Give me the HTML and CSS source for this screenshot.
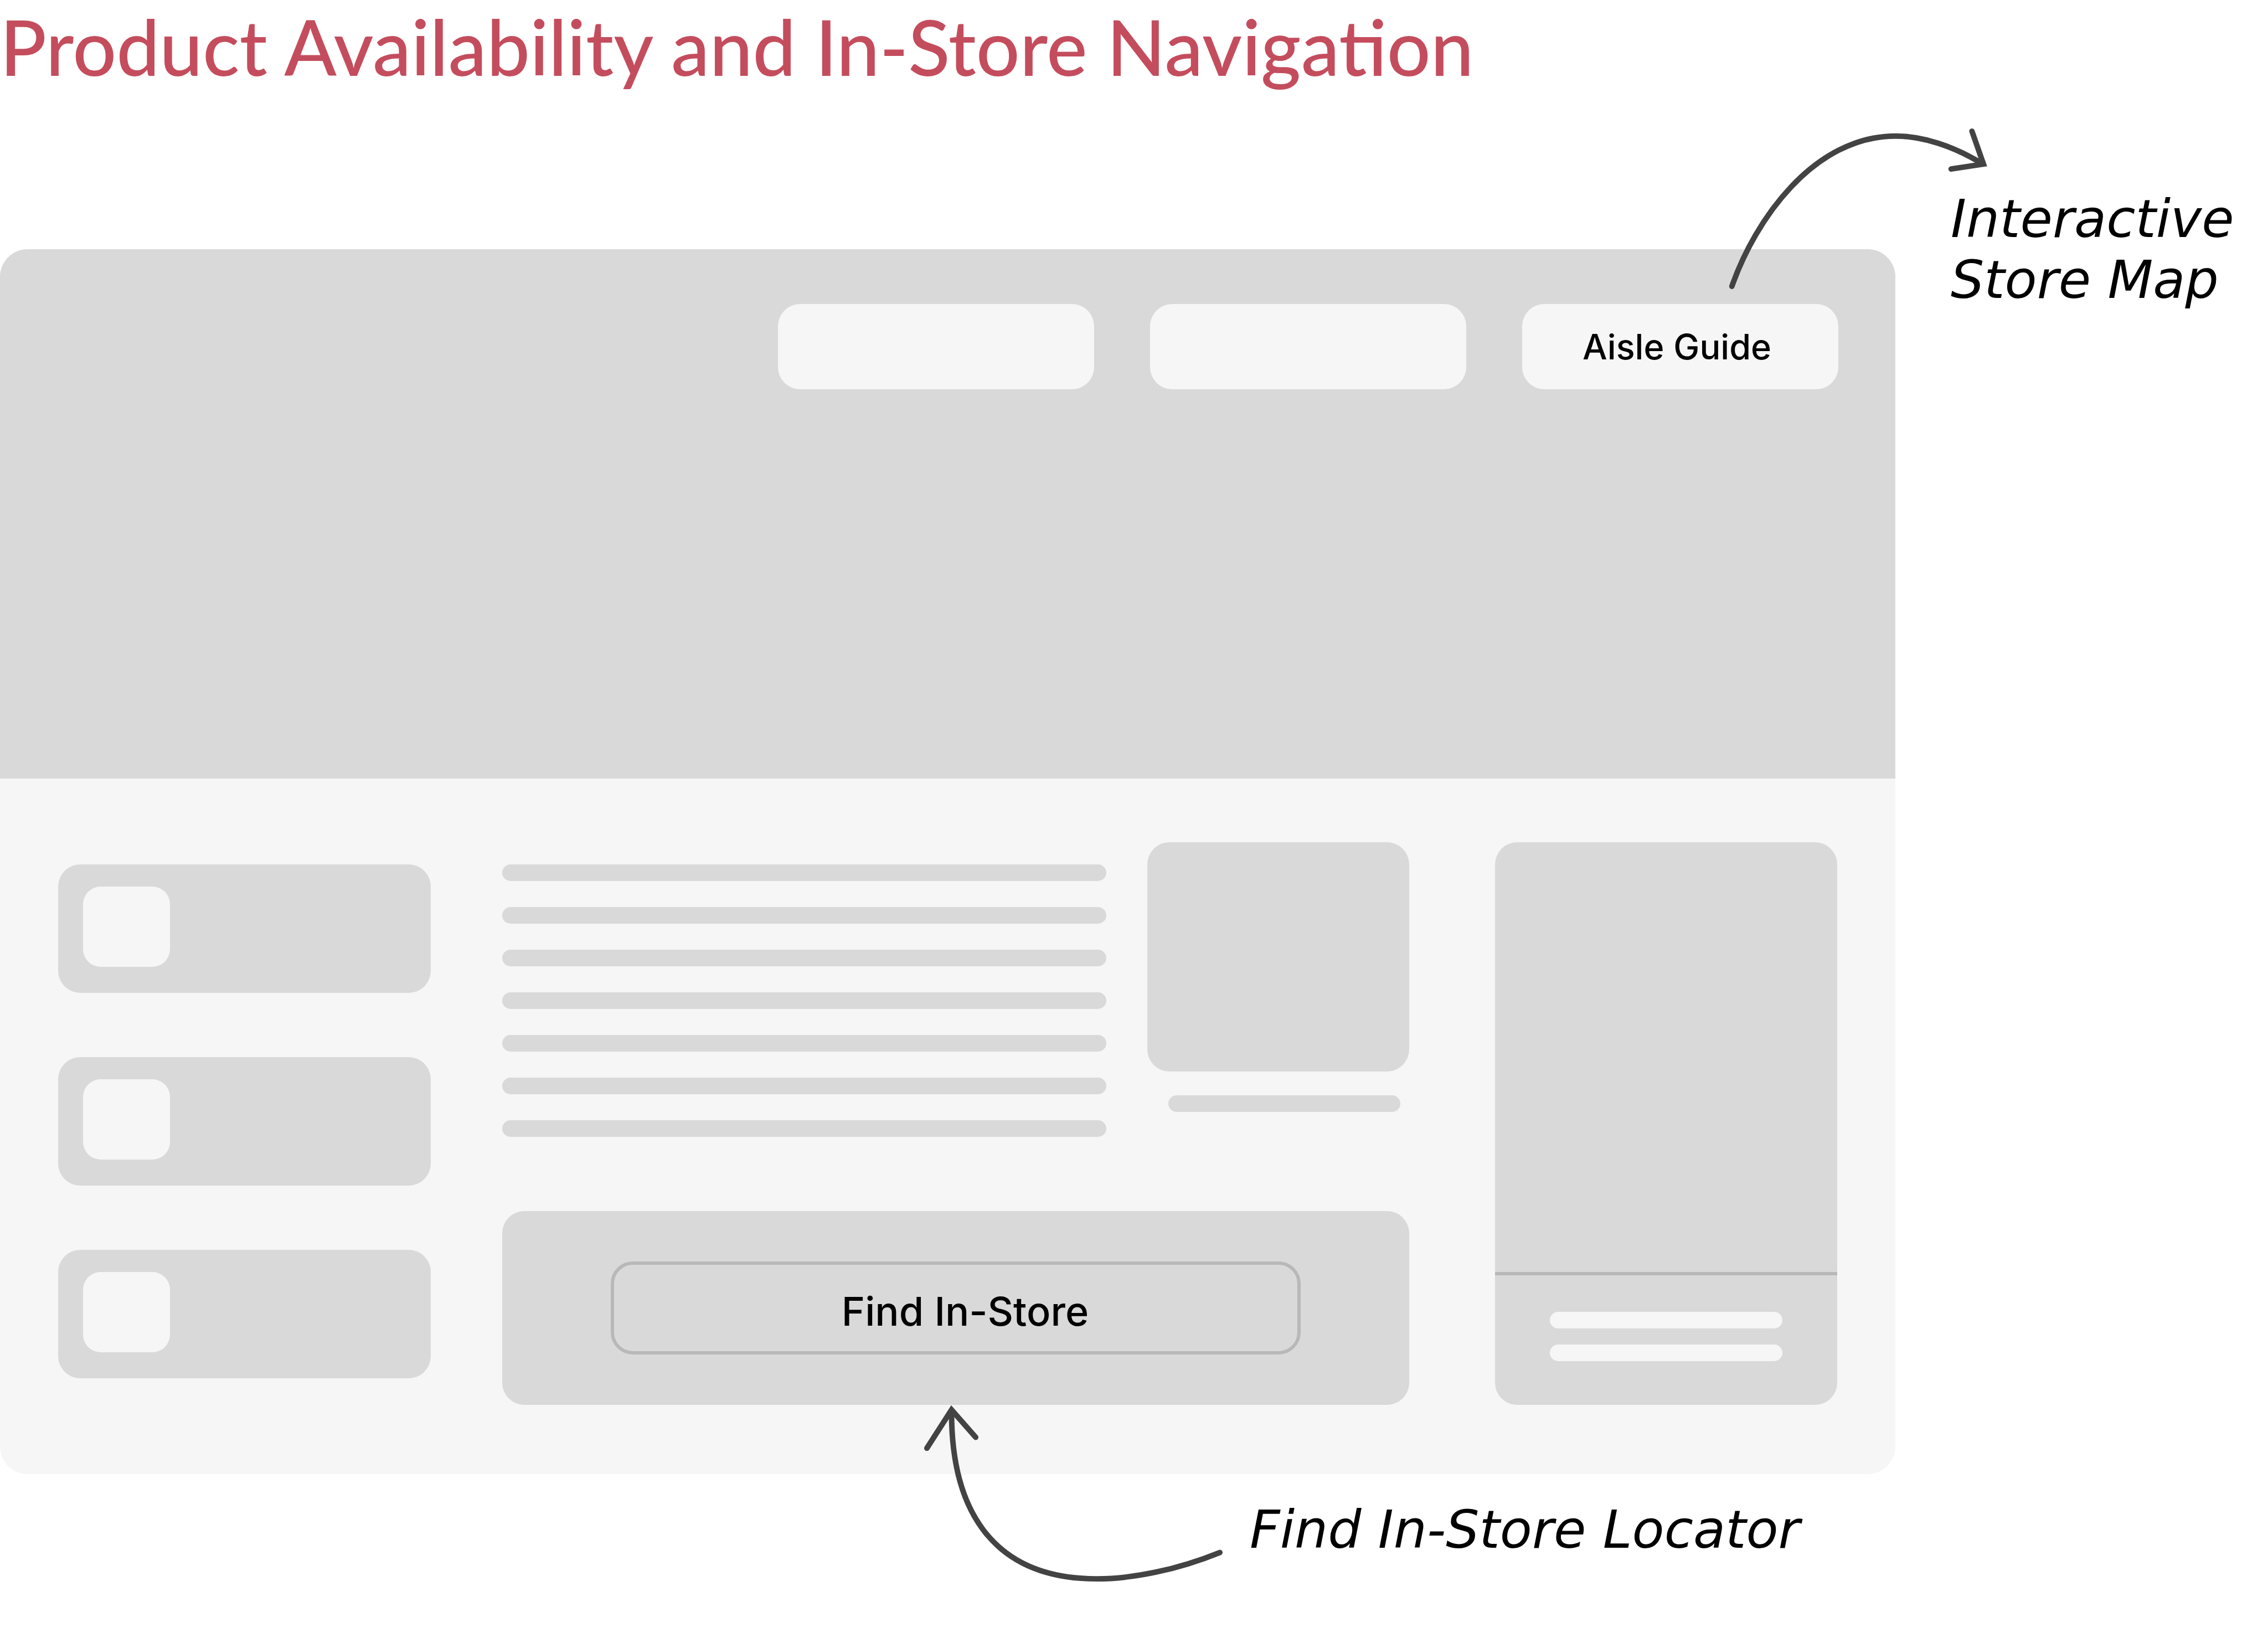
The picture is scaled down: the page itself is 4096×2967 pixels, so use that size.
FILE: index.html
```html
<!DOCTYPE html>
<html lang="en">
<head>
  <meta charset="utf-8">
  <meta name="viewport" content="width=device-width, initial-scale=1">
  <title>Product Availability and In-Store Navigation</title>
  <link rel="stylesheet" href="styles.css">
</head>
<body>
  <div class="page">
    <h1 class="title">Product Availability and In-Store Navigation</h1>

    <main class="panel">
      <header class="hero">
        <nav class="nav" aria-label="Store">
          <button class="nav-button" type="button" aria-label="Menu item 1"></button>
          <button class="nav-button" type="button" aria-label="Menu item 2"></button>
          <button class="nav-button" type="button">Aisle Guide</button>
        </nav>
      </header>

      <div class="content">
        <section class="products">
          <div class="product"><div class="thumb"></div></div>
          <div class="product"><div class="thumb"></div></div>
          <div class="product"><div class="thumb"></div></div>
        </section>

        <section class="detail">
          <div class="overview">
            <div class="lines">
              <div class="line"></div>
              <div class="line"></div>
              <div class="line"></div>
              <div class="line"></div>
              <div class="line"></div>
              <div class="line"></div>
              <div class="line"></div>
            </div>
            <div class="figure">
              <div class="picture"></div>
              <div class="line caption"></div>
            </div>
          </div>
          <div class="finder">
            <button class="find-button" type="button">Find In-Store</button>
          </div>
        </section>

        <section class="side-card">
          <div class="side-picture"></div>
          <div class="side-text">
            <div class="line light"></div>
            <div class="line light"></div>
          </div>
        </section>
      </div>
    </main>

    <aside class="note note-map">
      <svg class="arrow arrow-map" viewBox="3140 228 490 308" aria-hidden="true">
        <path d="M3158 522C3200 402 3306 248 3457 248C3506 248 3562 266 3616 299"/>
        <path d="M3596 239L3617 299L3558 308"/>
      </svg>
      <p class="note-text">Interactive<br>Store Map</p>
    </aside>

    <aside class="note note-locator">
      <p class="note-text">
        Find In-Store Locator
        <svg class="arrow arrow-locator" viewBox="1680 2558 556 330" aria-hidden="true">
          <path d="M2224 2831C2145 2863 2065 2879 1999 2879C1815 2879 1735 2760 1735 2576"/>
          <path d="M1690 2641L1735 2571L1779 2621"/>
        </svg>
      </p>
    </aside>
  </div>
</body>
</html>
```
FILE: styles.css
```css
:root {
  --grey: #d9d9d9;
  --light: #f6f6f6;
  --rule: #b8b8b8;
  --ink: #434343;
  --accent: #c44d5d;
}

* {
  box-sizing: border-box;
}

body {
  margin: 0;
  background: #fff;
  color: #000;
  font-family: Inter, sans-serif;
}

.page {
  display: grid;
  grid-template-columns: minmax(0, 1fr) 673px;
  grid-template-rows: 450px auto auto;
}

.title {
  grid-area: 1 / 1;
  margin: 0;
  color: var(--accent);
  font: 500 139px/167px Lato, sans-serif;
}

.panel {
  grid-area: 2 / 1;
  overflow: hidden;
  border-radius: 50px;
  background: var(--light);
}

.hero {
  min-height: 956px;
  padding: 99px 103px;
  background: var(--grey);
}

.nav {
  display: flex;
  justify-content: flex-end;
  gap: 101px;
}

.nav-button {
  width: 571px;
  height: 154px;
  padding: 0 12px 0 0;
  border: 0;
  border-radius: 40px;
  background: var(--light);
  color: #000;
  font: 500 63px/76px Inter, sans-serif;
}

.content {
  display: grid;
  grid-template-columns: 673px minmax(0, 1fr) 618px;
  column-gap: 129px;
  padding: 115px 105px 125px;
}

.products {
  display: flex;
  flex-direction: column;
  gap: 116px;
  padding-top: 40px;
}

.product {
  height: 232px;
  padding: 40px 45px;
  border-radius: 40px;
  background: var(--grey);
}

.thumb {
  width: 157px;
  height: 145px;
  border-radius: 32px;
  background: var(--light);
}

.detail {
  display: flex;
  flex-direction: column;
  gap: 134px;
  margin-right: 26px;
}

.overview {
  display: flex;
  gap: 74px;
}

.lines {
  display: flex;
  flex: 1;
  flex-direction: column;
  gap: 47px;
  padding-top: 40px;
}

.line {
  height: 30px;
  border-radius: 15px;
  background: var(--grey);
}

.figure {
  width: 473px;
}

.picture {
  height: 414px;
  border-radius: 40px;
  background: var(--grey);
}

.caption {
  margin: 43px 16px 0 38px;
}

.finder {
  padding: 91px 196px;
  border-radius: 40px;
  background: var(--grey);
}

.find-button {
  display: block;
  width: 100%;
  height: 168px;
  padding: 12px 0 0 34px;
  border: 6px solid var(--rule);
  border-radius: 40px;
  background: transparent;
  color: #000;
  font: 500 72px/84px Inter, sans-serif;
}

.side-card {
  display: flex;
  flex-direction: column;
  border-radius: 40px;
  background: var(--grey);
}

.side-picture {
  flex: 1;
}

.side-text {
  display: flex;
  flex-direction: column;
  gap: 29px;
  padding: 66px 99px 79px;
  border-top: 6px solid var(--rule);
}

.light {
  background: var(--light);
}

.note {
  position: relative;
}

.note-text {
  position: relative;
  margin: 0;
  font: italic 400 95px/110px "DejaVu Sans", sans-serif;
  white-space: nowrap;
}

.note-map {
  grid-area: 1 / 2 / span 2;
  padding: 340px 0 0 100px;
}

.note-locator {
  grid-area: 3 / 1;
  padding: 45px 0 150px 2257px;
}

.arrow {
  position: absolute;
  fill: none;
  stroke: var(--ink);
  stroke-width: 10;
  stroke-linecap: round;
}

.arrow-map {
  top: 226px;
  left: -313px;
  width: 485px;
}

.arrow-locator {
  right: 100%;
  bottom: -43px;
  width: 551px;
  margin-right: 42px;
}
```
